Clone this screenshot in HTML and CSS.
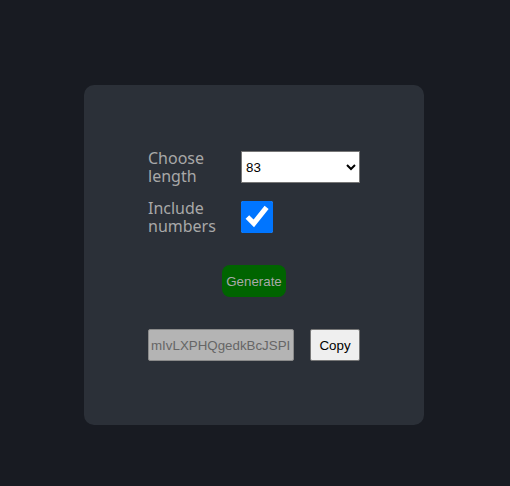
FILE: index.html
```html
<!DOCTYPE html>
<html>
<head>
<meta charset="utf-8">
<link rel="stylesheet" href="styles.css">
</head>
<body>
<main class="card">
  <div class="row">
    <label class="label" for="len">Choose length</label>
    <select id="len" class="select">
      <option>83</option>
    </select>
  </div>
  <div class="row row-check">
    <label class="label" for="num">Include numbers</label>
    <input id="num" class="check" type="checkbox" checked>
  </div>
  <div class="gen-wrap">
    <button class="gen">Generate</button>
  </div>
  <div class="out-row">
    <input class="out" type="text" value="mIvLXPHQgedkBcJSPI" readonly>
    <button class="copy">Copy</button>
  </div>
</main>
</body>
</html>
```

FILE: styles.css
```css
html, body {
  margin: 0;
  padding: 0;
  background: #181b22;
}
body {
  width: 510px;
  height: 486px;
}
.card {
  box-sizing: border-box;
  width: 340px;
  height: 340px;
  margin: 85px 0 0 84px;
  background: #2b3038;
  border-radius: 10px;
  padding: 66px 64px 0 64px;
  display: flex;
  flex-direction: column;
}
.row {
  display: flex;
  align-items: flex-start;
}
.row-check {
  margin-top: 16px;
}
.label {
  width: 93px;
  margin-top: -2px;
  font-family: "Noto Sans", "Open Sans", sans-serif;
  font-size: 16px;
  line-height: 18px;
  color: #a8a8a8;
}
.select {
  box-sizing: border-box;
  width: 119px;
  height: 32px;
  margin: 0;
  font-family: "Liberation Sans", Arial, sans-serif;
  font-size: 13.33px;
  background: #fff;
  color: #000;
  border: 1px solid #767676;
}
.check {
  width: 32px;
  height: 32px;
  margin: 0;
  accent-color: #0075ff;
}
.gen-wrap {
  display: flex;
  justify-content: center;
  margin-top: 30px;
}
.gen {
  width: 64px;
  height: 32px;
  padding: 0;
  border: none;
  border-radius: 8px;
  background: #006400;
  color: #a9a9a9;
  font-family: "Liberation Sans", Arial, sans-serif;
  font-size: 13.33px;
}
.out-row {
  display: flex;
  gap: 16px;
  margin-top: 32px;
}
.out {
  box-sizing: border-box;
  width: 146px;
  height: 32px;
  margin: 0;
  padding: 1px 2px;
  border: 1px solid #8a8a8a;
  border-radius: 2px;
  background: #b4b4b4;
  color: #666;
  font-family: "Liberation Sans", Arial, sans-serif;
  font-size: 13.33px;
}
.copy {
  box-sizing: border-box;
  width: 50px;
  height: 32px;
  padding: 0 6px;
  border: 1px solid #767676;
  border-radius: 2px;
  background: #efefef;
  color: #000;
  font-family: "Liberation Sans", Arial, sans-serif;
  font-size: 13.33px;
}
```
